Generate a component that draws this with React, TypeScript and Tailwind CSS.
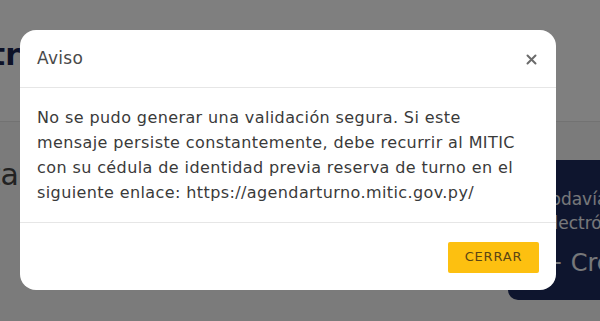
import React from "react";

export default function App() {
  const font = { fontFamily: '"DejaVu Sans", "Open Sans", sans-serif' };
  return (
    <div className="relative w-[600px] h-[321px] overflow-hidden bg-[#f7f7f7]" style={font}>
      {/* background page */}
      <div className="h-[122px] bg-white border-b border-[#e4e4e4] pt-[40px]">
        <div className="w-[20px] overflow-hidden flex justify-end">
          <span className="text-[30px] font-bold text-[#1b2550] leading-none whitespace-nowrap">Registr</span>
        </div>
      </div>
      <div className="flex justify-between">
        <div className="w-[19px] overflow-hidden flex justify-end mt-[38px] h-[40px]">
          <span className="text-[30px] text-[#444] leading-none whitespace-nowrap">Cuenta</span>
        </div>
        <div className="mt-[38px] w-[92px] h-[140px] bg-[#1c2a5c] rounded-bl-[10px] pl-[35px] pt-[27px] text-[#eef0f5] text-[17px] leading-[24px] whitespace-nowrap overflow-hidden">
          <div>Todavía</div>
          <div>electrónica</div>
          <div className="mt-[13px] text-[24px] leading-[30px]">+ Crear</div>
        </div>
      </div>
      {/* overlay */}
      <div className="absolute inset-0 bg-black/50" />
      {/* modal */}
      <div className="absolute left-[20px] top-[30px] w-[536px] bg-white rounded-[16px] flex flex-col">
        <div className="h-[58px] flex items-center justify-between pl-[17px] pr-[19px] border-b border-[#e6e6e6]">
          <span className="text-[17px] text-[#4a4a4a] tracking-[0.3px]">Aviso</span>
          <svg width="11" height="11" viewBox="0 0 11 11" className="mt-[1px]">
            <path d="M1.5 1.5 L9.5 9.5 M9.5 1.5 L1.5 9.5" stroke="#6b6b6b" strokeWidth="2" strokeLinecap="round" />
          </svg>
        </div>
        <div className="px-[17px] py-[17px] text-[16px] leading-[25px] text-[#3a3a3a] tracking-[0.4px] whitespace-nowrap border-b border-[#e6e6e6]">
          <div>No se pudo generar una validación segura. Si este</div>
          <div>mensaje persiste constantemente, debe recurrir al MITIC</div>
          <div>con su cédula de identidad previa reserva de turno en el</div>
          <div>siguiente enlace: https://agendarturno.mitic.gov.py/</div>
        </div>
        <div className="h-[67px] flex items-center justify-end pr-[17px]">
          <button className="w-[91px] h-[31px] bg-[#fdc010] rounded-[2px] text-[13px] tracking-[0.8px] text-[#5b4614] mt-[1px]">
            CERRAR
          </button>
        </div>
      </div>
    </div>
  );
}
